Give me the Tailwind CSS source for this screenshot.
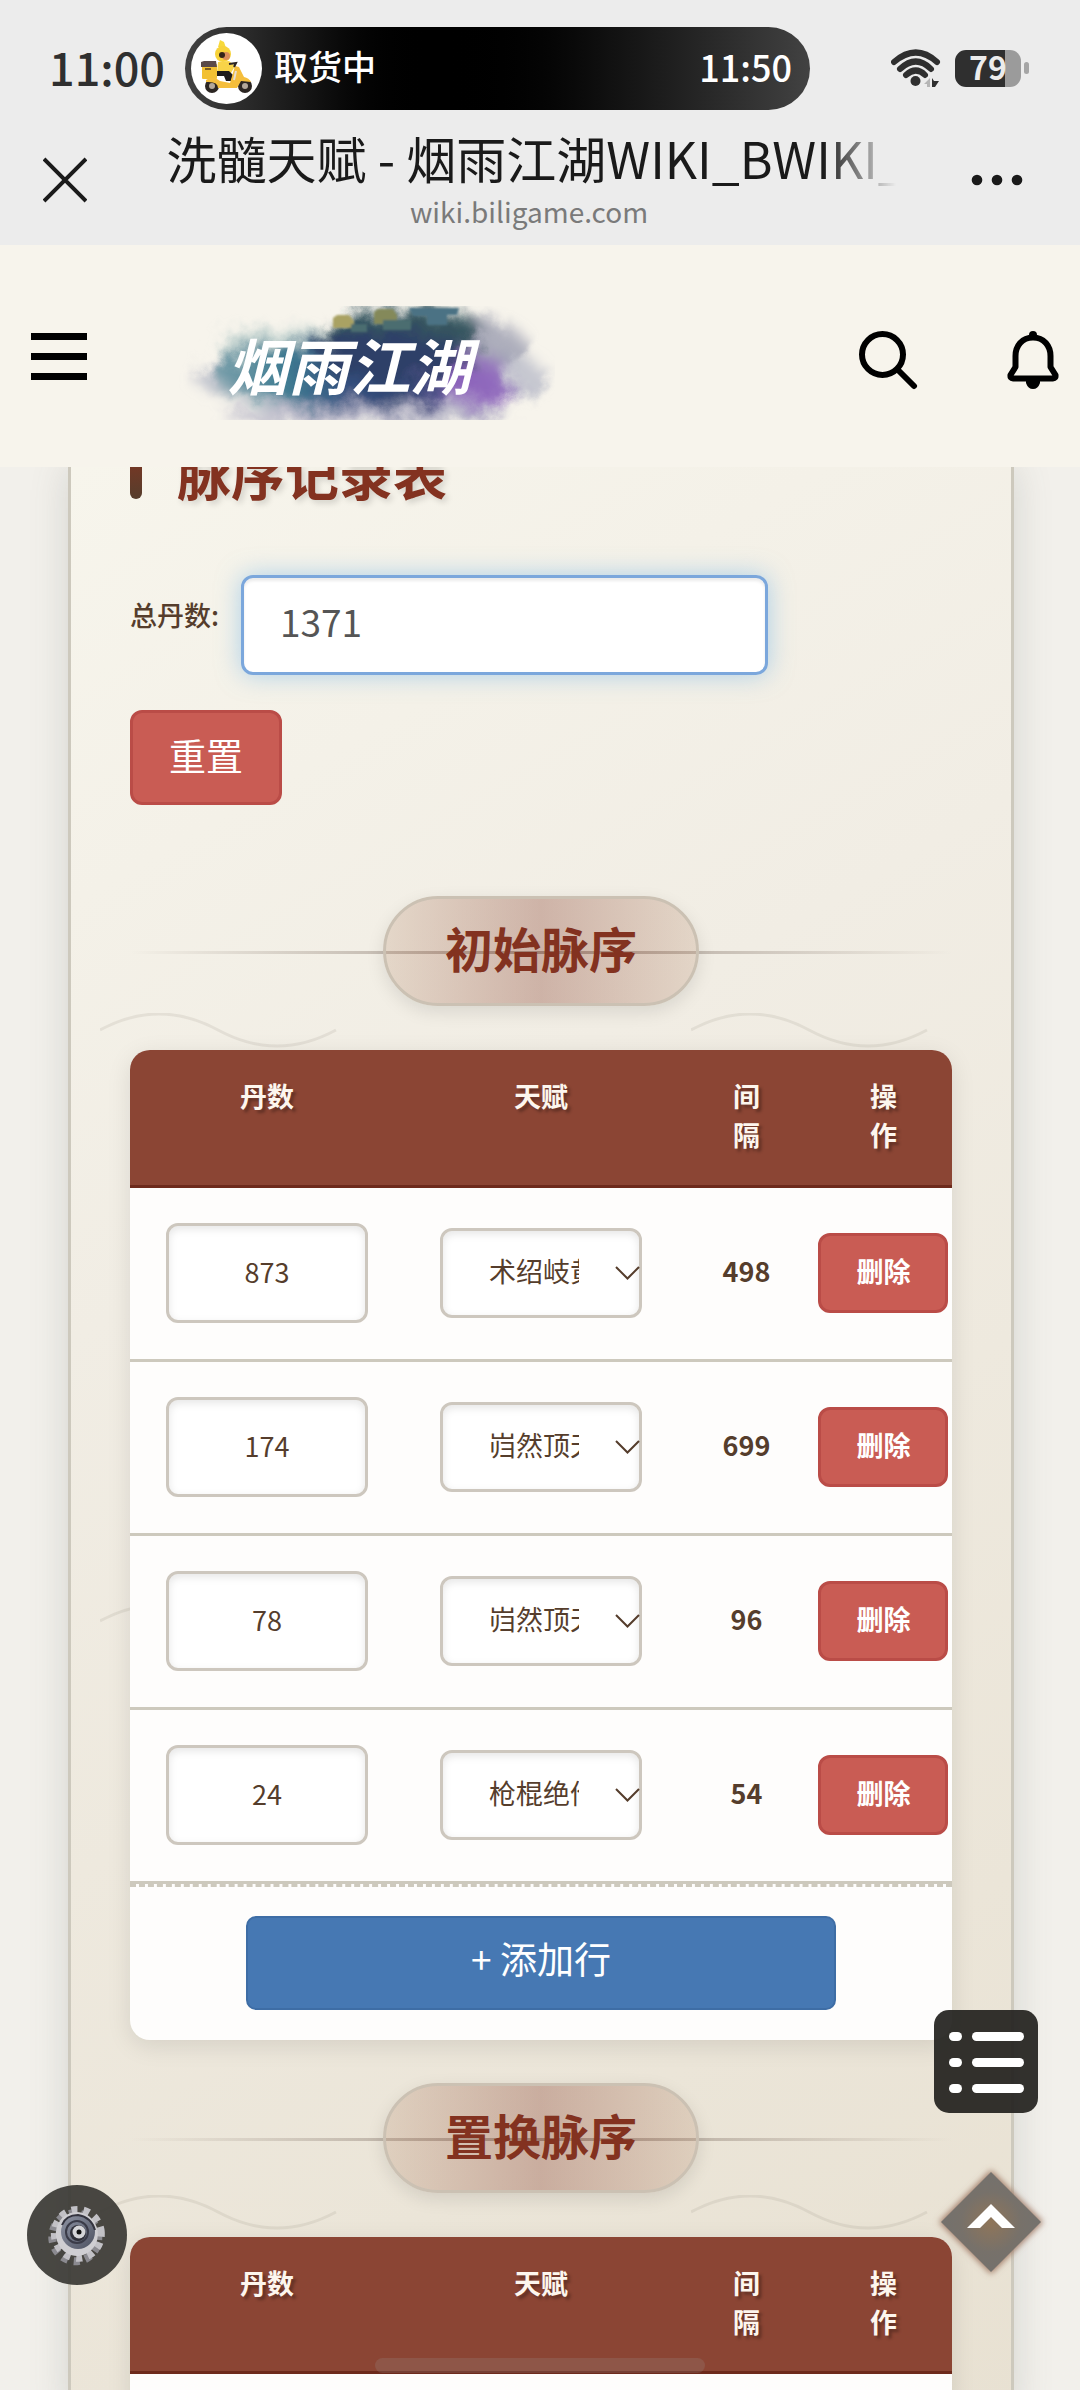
<!DOCTYPE html>
<html lang="zh-CN">
<head>
    <meta charset="UTF-8">
    <meta name="viewport" content="width=device-width, initial-scale=1.0">
    <title>洗髓天赋 - 烟雨江湖WIKI_BWIKI</title>
    <script src="https://cdn.jsdelivr.net/npm/@tailwindcss/browser@4"></script>
</head>
<body class="relative flex h-screen flex-col overflow-hidden bg-[#f2f0eb] font-['Noto_Sans_CJK_SC',sans-serif] text-[27px] text-[#553d2c]">

    <!-- Phone status bar and browser bar -->
    <div class="shrink-0 bg-[#ececec]">
        <div class="flex h-[136px] items-center pl-[49px] pr-[51px]">
            <span class="w-[136px] pb-1 text-[45px] leading-none font-medium text-[#2f2f2f]">11:00</span>
            <div class="flex h-[83px] w-[625px] items-center rounded-full bg-linear-to-r from-[#424242] via-black via-40% to-[#424242] pl-[6px] pr-[18px] text-white">
                <svg class="h-[71px] w-[71px]" viewBox="0 0 71 71">
                    <circle cx="35.500" cy="35.500" r="35.500" fill="#fff"/>
                    <path d="M27 14 L29 7 L33 9 L35 15 Z" fill="#f7d93a"/>
                    <circle cx="32" cy="21" r="8" fill="#f7d23a"/>
                    <circle cx="35" cy="23" r="4" fill="#d98d5c"/>
                    <circle cx="31" cy="22" r="3" fill="#332419"/>
                    <path d="M27 29 L38 28 L44 33 L40 40 L26 40 Z" fill="#f8d448"/>
                    <path d="M24 38 H38 L42 42 L40 48 H35 L33 43 H24 Z" fill="#1e1b1b"/>
                    <rect x="11" y="31" width="15" height="15" rx="1" fill="#f2c033"/>
                    <path d="M10 29 L13 28 H25 L26 34 H10 Z" fill="#5a4a49"/>
                    <path d="M14 36 h6" stroke="#7a5b22" stroke-width="2"/>
                    <circle cx="21" cy="53" r="7" fill="#2b2522"/>
                    <circle cx="21" cy="53" r="3" fill="#b3a79a"/>
                    <circle cx="54" cy="53" r="7" fill="#2b2522"/>
                    <circle cx="54" cy="53" r="3" fill="#b3a79a"/>
                    <path d="M15 47 Q22 42 29 48 L39 50 L44 33 L48 34 L53 44 Q58 45 60 49 L50 48 L46 55 H27 Q27 48 15 49 Z" fill="#f5be3c"/>
                    <path d="M38 31 L45 30 L43 34" fill="none" stroke="#2b2522" stroke-width="2"/>
                    <path d="M45 38 L43 47" stroke="#e7dfd2" stroke-width="2"/>
                </svg>
                <span class="ml-3 pb-1 text-[34px] leading-none font-medium">取货中</span>
                <span class="ml-auto pb-1 text-[36px] leading-none font-medium">11:50</span>
            </div>
            <svg class="ml-auto h-[38px] w-[50px]" viewBox="0 0 50 38">
                <g fill="none" stroke="#2f2f2f" stroke-width="6" stroke-linecap="round">
                    <path d="M3 13 Q25 -6 46 13"/>
                    <path d="M9 20 Q25 5 40 20"/>
                    <path d="M15 26 Q25 17 34 26"/>
                </g>
                <circle cx="24.500" cy="32" r="5" fill="#2f2f2f"/>
                <path d="M39 29 V38 H36 V35 H33 Z" fill="#b5b5b5"/>
                <path d="M41 29 L43 32 H48 L44 38 H41 Z" fill="#2f2f2f"/>
            </svg>
            <div class="ml-[14px] flex items-center gap-[3px]">
                <div class="flex h-[37px] w-[66px] items-center justify-center rounded-[11px] bg-linear-to-r from-[#2f2f2f] from-76% to-[#9b9b9b] to-76% pb-1 text-[32px] leading-none font-bold text-[#ececec]">79</div>
                <div class="h-[12px] w-[5px] rounded-full bg-[#a5a5a5]"></div>
            </div>
        </div>
        <div class="flex h-[109px] justify-between pl-[43px] pr-[57px]">
            <button aria-label="关闭" class="mt-[21px] h-[46px] w-[44px]">
                <svg class="h-[46px] w-[44px]" viewBox="0 0 44 46" stroke="#1a1a1a" stroke-width="4"><path d="M1 2 L43 44 M43 2 L1 44"/></svg>
            </button>
            <div class="w-[733px] text-center">
                <div class="h-[60px] overflow-hidden mask-r-from-90% mask-r-to-100% pl-1 text-left text-[50px] leading-[42px] whitespace-nowrap text-[#1a1a1a]">洗髓天赋 - 烟雨江湖WIKI_BWIKI_</div>
                <div class="text-[28px] leading-[30px] text-[#7a7a7a]">wiki.biligame.com</div>
            </div>
            <button aria-label="更多" class="mt-[38px] h-3 w-[52px]">
                <svg class="h-3 w-[52px]" viewBox="0 0 52 12" fill="#1a1a1a"><circle cx="6" cy="6" r="5.300"/><circle cx="26" cy="6" r="5.300"/><circle cx="46" cy="6" r="5.300"/></svg>
            </button>
        </div>
    </div>

    <!-- Site header -->
    <header class="flex h-[222px] shrink-0 items-center bg-[#f7f4ec] pl-[31px] pr-[21px]">
        <button aria-label="菜单" class="flex w-[56px] flex-col gap-[13px]">
            <span class="h-[7px] w-full bg-black"></span>
            <span class="h-[7px] w-full bg-black"></span>
            <span class="h-[7px] w-full bg-black"></span>
        </button>
        <a href="#" class="ml-[84px] mt-[14px] block">
            <svg class="h-[114px] w-[384px]" viewBox="0 0 384 114" role="img" aria-label="烟雨江湖">
                <defs>
                    <filter id="ink" x="-20%" y="-20%" width="140%" height="140%">
                        <feGaussianBlur stdDeviation="7" result="b"/>
                        <feTurbulence type="fractalNoise" baseFrequency="0.04" numOctaves="4" seed="4" result="n"/>
                        <feDisplacementMap in="b" in2="n" scale="26"/>
                    </filter>
                    <filter id="roof" x="-10%" y="-10%" width="120%" height="120%"><feGaussianBlur stdDeviation="1"/></filter>
                    <linearGradient id="wash" x1="0" x2="1">
                        <stop offset="0" stop-color="#7fa3ad"/>
                        <stop offset=".25" stop-color="#3f7c92"/>
                        <stop offset=".45" stop-color="#34507f"/>
                        <stop offset=".65" stop-color="#2f4470"/>
                        <stop offset=".85" stop-color="#8a6bb5"/>
                        <stop offset="1" stop-color="#b3a8c4"/>
                    </linearGradient>
                </defs>
                <g filter="url(#ink)">
                    <ellipse cx="200" cy="70" rx="178" ry="32" fill="#b9bcc9" opacity=".8"/>
                    <ellipse cx="116" cy="44" rx="68" ry="22" fill="#b5cbc9" opacity=".7"/>
                    <ellipse cx="296" cy="42" rx="60" ry="30" fill="#8e92a8" opacity=".7"/>
                    <ellipse cx="190" cy="68" rx="150" ry="34" fill="url(#wash)"/>
                    <ellipse cx="234" cy="26" rx="78" ry="24" fill="#35545f"/>
                    <ellipse cx="220" cy="50" rx="76" ry="26" fill="#2d4068"/>
                    <ellipse cx="308" cy="80" rx="32" ry="24" fill="#8d63bd" opacity=".8"/>
                    <ellipse cx="196" cy="108" rx="144" ry="10" fill="#9c9db8" opacity=".7"/>
                </g>
                <g filter="url(#roof)">
                    <path d="M162 12 L166 9 H178 L183 15 V22 H162 Z" fill="#a9a264"/>
                    <path d="M203 6 L207 3 H222 L226 9 V18 H203 Z" fill="#84895a"/>
                    <path d="M238 2 H288 L286 9 H276 V19 H256 V10 H242 Z" fill="#4b7284"/>
                    <path d="M180 18 H196 V26 H180 Z M212 14 H240 V24 H212 Z" fill="#4c6d70"/>
                </g>
                <text x="56" y="84" font-size="61" font-weight="700" font-style="italic" fill="#fff">烟雨江湖</text>
            </svg>
        </a>
        <button aria-label="搜索" class="mt-[8px] ml-auto">
            <svg class="h-[60px] w-[60px]" viewBox="0 0 60 60" fill="none" stroke="#000" stroke-width="6" stroke-linecap="round"><circle cx="24.500" cy="24.500" r="20.500"/><path d="M40 40 L56 56"/></svg>
        </button>
        <button aria-label="消息" class="mt-[8px] ml-[89px]">
            <svg class="h-[60px] w-[52px]" viewBox="0 0 52 60" fill="none" stroke="#000" stroke-width="6" stroke-linejoin="round">
                <path d="M26 7.500 C15 7.500 8.500 16 8.500 26 V37 L3.500 45 Q3 48.500 6 48.500 H46 Q49 48.500 48.500 45 L43.500 37 V26 C43.500 16 37 7.500 26 7.500 Z"/>
                <circle cx="26" cy="5" r="4" fill="#000" stroke="none"/>
                <path d="M19 49 H33 V53 Q31 59 26 59 Q21 59 19 53 Z" fill="#000" stroke="none"/>
            </svg>
        </button>
    </header>

    <main class="min-h-0 flex-1 overflow-hidden">
        <div class="relative ml-[68px] mr-[66px] flow-root min-h-full border-x-[3px] border-[#cdc9bd] bg-linear-[150deg] from-[#f7f5ec] via-[#f1ede4] via-35% to-[#e8e1d2] px-[59px] shadow-[0_0_36px_rgba(90,100,100,0.2)]">
            <!-- wave motif behind the tables -->
            <svg class="absolute inset-0 h-full w-full" aria-hidden="true">
                <defs>
                    <pattern id="wave" x="29" y="546" width="591" height="591" patternUnits="userSpaceOnUse">
                        <path d="M0 17 Q59 -15 118 17 T236 17" fill="none" stroke="#8b8375" stroke-opacity=".14" stroke-width="3"/>
                    </pattern>
                </defs>
                <rect width="100%" height="100%" fill="url(#wave)"/>
            </svg>

            <div class="relative">
                <h2 class="-mt-[28px] flex h-[68px] items-center gap-[35px] text-[54px] leading-none font-bold text-[#833220] text-shadow-[3px_3px_6px_rgba(0,0,0,0.15)]">
                    <span class="h-[52px] w-3 rounded-full bg-linear-to-b from-[#833220] to-[#553d2c]"></span>
                    脉序记录表
                </h2>

                <div class="mt-[68px] flex items-center">
                    <label for="total" class="w-[111px] pb-[20px] text-[27px] font-medium">总丹数:</label>
                    <input id="total" type="text" inputmode="numeric" value="1371" class="h-[100px] w-[527px] rounded-[12px] border-[3px] border-[#7ba7dc] bg-white px-[36px] pb-2 text-[37px] text-[#555] shadow-[inset_0_3px_3px_rgba(0,0,0,0.08),0_0_24px_rgba(102,175,233,0.5)] outline-none">
                </div>
                <button class="mt-[35px] h-[95px] w-[152px] rounded-[12px] border-[3px] border-[#ba4c47] bg-[#c95c54] pb-1 text-[37px] text-white">重置</button>

                <section class="mt-[91px]">
                    <div class="relative flex justify-center">
                        <div class="absolute top-[55px] right-0 left-0 h-[3px] bg-linear-to-r from-transparent via-[#8b7b70]/70 to-transparent"></div>
                        <h3 class="relative flex h-[110px] w-[316px] items-center justify-center rounded-full border-[3px] border-[#cbc1b3] bg-linear-to-r from-[#b08060]/22 via-[#8b4534]/35 to-[#b08060]/22 pb-2 text-[48px] leading-none font-bold text-[#833220] shadow-[0_6px_18px_rgba(0,0,0,0.1)]">初始脉序</h3>
                    </div>
                    <div class="mt-11 overflow-hidden rounded-[20px] bg-[#fefdfc] shadow-[0_6px_24px_rgba(0,0,0,0.1)]">
                        <table class="w-full table-fixed text-center">
                            <thead>
                                <tr class="h-[136px] border-b-[3px] border-[#6d2a1c] bg-[#8b4534] align-top leading-[39px] text-[#fdf6ee] text-shadow-[3px_3px_3px_rgba(0,0,0,0.3)]">
                                    <th scope="col" class="w-1/3 pt-[26px] font-bold">丹数</th>
                                    <th scope="col" class="w-1/3 pt-[26px] font-bold">天赋</th>
                                    <th scope="col" class="w-1/6 px-[48px] pt-[26px] font-bold">间隔</th>
                                    <th scope="col" class="w-1/6 px-[48px] pt-[26px] font-bold">操作</th>
                                </tr>
                            </thead>
                            <tbody>
                                <tr class="h-[174px] border-b-[3px] border-[#cdc9bd]">
                                    <td class="px-9"><input type="text" aria-label="丹数" value="873" class="h-[100px] w-full rounded-[12px] border-[3px] border-[#cdc7be] bg-white pb-1 text-center shadow-[inset_0_3px_9px_rgba(0,0,0,0.1)]"></td>
                                    <td class="px-9">
                                        <div class="relative">
                                            <select aria-label="天赋" class="h-[90px] w-full appearance-none rounded-[12px] border-[3px] border-[#cdc7be] bg-white pr-[60px] pb-1 pl-[46px] shadow-[inset_0_3px_9px_rgba(0,0,0,0.1)]"><option>术绍岐黄</option></select>
                                            <svg class="pointer-events-none absolute top-[38px] right-[2px] h-[14px] w-[25px]" viewBox="0 0 25 14" fill="none" stroke="#553d2c" stroke-width="2"><path d="M1 1 L12.500 12.500 L24 1"/></svg>
                                        </div>
                                    </td>
                                    <td class="pb-1 font-bold">498</td>
                                    <td><button class="h-[80px] w-[130px] rounded-[12px] border-[3px] border-[#ba4c47] bg-[#c95c54] pb-1 font-bold text-white">删除</button></td>
                                </tr>
                                <tr class="h-[174px] border-b-[3px] border-[#cdc9bd]">
                                    <td class="px-9"><input type="text" aria-label="丹数" value="174" class="h-[100px] w-full rounded-[12px] border-[3px] border-[#cdc7be] bg-white pb-1 text-center shadow-[inset_0_3px_9px_rgba(0,0,0,0.1)]"></td>
                                    <td class="px-9">
                                        <div class="relative">
                                            <select aria-label="天赋" class="h-[90px] w-full appearance-none rounded-[12px] border-[3px] border-[#cdc7be] bg-white pr-[60px] pb-1 pl-[46px] shadow-[inset_0_3px_9px_rgba(0,0,0,0.1)]"><option>岿然顶天</option></select>
                                            <svg class="pointer-events-none absolute top-[38px] right-[2px] h-[14px] w-[25px]" viewBox="0 0 25 14" fill="none" stroke="#553d2c" stroke-width="2"><path d="M1 1 L12.500 12.500 L24 1"/></svg>
                                        </div>
                                    </td>
                                    <td class="pb-1 font-bold">699</td>
                                    <td><button class="h-[80px] w-[130px] rounded-[12px] border-[3px] border-[#ba4c47] bg-[#c95c54] pb-1 font-bold text-white">删除</button></td>
                                </tr>
                                <tr class="h-[174px] border-b-[3px] border-[#cdc9bd]">
                                    <td class="px-9"><input type="text" aria-label="丹数" value="78" class="h-[100px] w-full rounded-[12px] border-[3px] border-[#cdc7be] bg-white pb-1 text-center shadow-[inset_0_3px_9px_rgba(0,0,0,0.1)]"></td>
                                    <td class="px-9">
                                        <div class="relative">
                                            <select aria-label="天赋" class="h-[90px] w-full appearance-none rounded-[12px] border-[3px] border-[#cdc7be] bg-white pr-[60px] pb-1 pl-[46px] shadow-[inset_0_3px_9px_rgba(0,0,0,0.1)]"><option>岿然顶天</option></select>
                                            <svg class="pointer-events-none absolute top-[38px] right-[2px] h-[14px] w-[25px]" viewBox="0 0 25 14" fill="none" stroke="#553d2c" stroke-width="2"><path d="M1 1 L12.500 12.500 L24 1"/></svg>
                                        </div>
                                    </td>
                                    <td class="pb-1 font-bold">96</td>
                                    <td><button class="h-[80px] w-[130px] rounded-[12px] border-[3px] border-[#ba4c47] bg-[#c95c54] pb-1 font-bold text-white">删除</button></td>
                                </tr>
                                <tr class="h-[174px] border-b-[3px] border-[#cdc9bd]">
                                    <td class="px-9"><input type="text" aria-label="丹数" value="24" class="h-[100px] w-full rounded-[12px] border-[3px] border-[#cdc7be] bg-white pb-1 text-center shadow-[inset_0_3px_9px_rgba(0,0,0,0.1)]"></td>
                                    <td class="px-9">
                                        <div class="relative">
                                            <select aria-label="天赋" class="h-[90px] w-full appearance-none rounded-[12px] border-[3px] border-[#cdc7be] bg-white pr-[60px] pb-1 pl-[46px] shadow-[inset_0_3px_9px_rgba(0,0,0,0.1)]"><option>枪棍绝伦</option></select>
                                            <svg class="pointer-events-none absolute top-[38px] right-[2px] h-[14px] w-[25px]" viewBox="0 0 25 14" fill="none" stroke="#553d2c" stroke-width="2"><path d="M1 1 L12.500 12.500 L24 1"/></svg>
                                        </div>
                                    </td>
                                    <td class="pb-1 font-bold">54</td>
                                    <td><button class="h-[80px] w-[130px] rounded-[12px] border-[3px] border-[#ba4c47] bg-[#c95c54] pb-1 font-bold text-white">删除</button></td>
                                </tr>
                            </tbody>
                        </table>
                        <div class="flex justify-center border-t-[3px] border-dashed border-[#cdc9bd] pt-[29px] pb-[30px]">
                            <button class="h-[94px] w-[590px] rounded-[10px] border-2 border-[#3e6da5] bg-[#4678b3] pb-2 text-[37px] text-white">+ 添加行</button>
                        </div>
                    </div>
                </section>

                <section class="mt-[43px]">
                    <div class="relative flex justify-center">
                        <div class="absolute top-[55px] right-0 left-0 h-[3px] bg-linear-to-r from-transparent via-[#8b7b70]/70 to-transparent"></div>
                        <h3 class="relative flex h-[110px] w-[316px] items-center justify-center rounded-full border-[3px] border-[#cbc1b3] bg-linear-to-r from-[#b08060]/22 via-[#8b4534]/35 to-[#b08060]/22 pb-2 text-[48px] leading-none font-bold text-[#833220] shadow-[0_6px_18px_rgba(0,0,0,0.1)]">置换脉序</h3>
                    </div>
                    <div class="mt-11 overflow-hidden rounded-[20px] bg-[#fefdfc] pb-[40px] shadow-[0_6px_24px_rgba(0,0,0,0.1)]">
                        <table class="w-full table-fixed text-center">
                            <thead>
                                <tr class="h-[136px] border-b-[3px] border-[#6d2a1c] bg-[#8b4534] align-top leading-[39px] text-[#fdf6ee] text-shadow-[3px_3px_3px_rgba(0,0,0,0.3)]">
                                    <th scope="col" class="w-1/3 pt-[26px] font-bold">丹数</th>
                                    <th scope="col" class="w-1/3 pt-[26px] font-bold">天赋</th>
                                    <th scope="col" class="w-1/6 px-[48px] pt-[26px] font-bold">间隔</th>
                                    <th scope="col" class="w-1/6 px-[48px] pt-[26px] font-bold">操作</th>
                                </tr>
                            </thead>
                        </table>
                    </div>
                </section>
            </div>
        </div>
    </main>

    <!-- Floating controls -->
    <button aria-label="目录" class="absolute right-[42px] bottom-[277px] h-[103px] w-[104px] rounded-[15px] bg-[#23221f]/93">
        <svg class="h-[103px] w-[104px]" viewBox="0 0 104 103" fill="#fff">
            <rect x="15" y="22" width="13" height="9" rx="4.500"/><rect x="38" y="22" width="52" height="9" rx="4.500"/>
            <rect x="15" y="48" width="13" height="9" rx="4.500"/><rect x="38" y="48" width="52" height="9" rx="4.500"/>
            <rect x="15" y="74" width="13" height="9" rx="4.500"/><rect x="38" y="74" width="52" height="9" rx="4.500"/>
        </svg>
    </button>
    <button aria-label="返回顶部" class="absolute right-[29px] bottom-[108px] h-[120px] w-[120px]">
        <svg class="h-[120px] w-[120px]" viewBox="0 0 120 120">
            <defs>
                <radialGradient id="glow"><stop offset="0" stop-color="#8f7559"/><stop offset=".6" stop-color="#77716a"/><stop offset="1" stop-color="#74716d"/></radialGradient>
                <filter id="halo" x="-20%" y="-20%" width="140%" height="140%"><feGaussianBlur stdDeviation="3"/></filter>
            </defs>
            <path d="M60 8 L112 60 L60 112 L8 60 Z" fill="#a07a66" filter="url(#halo)"/>
            <path d="M60 10 L110 60 L60 110 L10 60 Z" fill="url(#glow)"/>
            <path d="M60 42 L84 66 H71 L60 55 L49 66 H36 Z" fill="#fff"/>
        </svg>
    </button>
    <button aria-label="设置" class="absolute bottom-[105px] left-[27px] h-[100px] w-[100px] rounded-full bg-[#393834]/92">
        <svg class="h-[100px] w-[100px]" viewBox="0 0 100 100">
            <defs>
                <linearGradient id="steel" x1="0" y1="0" x2="1" y2="1"><stop offset="0" stop-color="#8e93a3"/><stop offset=".5" stop-color="#6f7484"/><stop offset="1" stop-color="#4c5060"/></linearGradient>
            </defs>
            <g transform="rotate(-8 50 50)" fill="none">
                <ellipse cx="48" cy="52" rx="23" ry="24" stroke="#8b8a90" stroke-width="8" stroke-dasharray="6 5.900"/>
                <ellipse cx="51" cy="49" rx="23" ry="24" stroke="#c2c1c6" stroke-width="8" stroke-dasharray="6 5.900"/>
                <ellipse cx="50" cy="49" rx="21" ry="22" fill="#cfced2"/>
            </g>
            <ellipse cx="51" cy="47" rx="17" ry="17" fill="url(#steel)"/>
            <path d="M35 40 Q39 30 51 30 Q64 32 68 45" fill="none" stroke="#34343f" stroke-width="2"/>
            <circle cx="50" cy="47" r="11" fill="none" stroke="#3a3b48" stroke-width="2"/>
            <circle cx="51" cy="48" r="8" fill="#2f2f38"/>
            <circle cx="52" cy="47" r="6.500" fill="#d5d5d8"/>
            <circle cx="52" cy="47" r="2.500" fill="#111"/>
        </svg>
    </button>
    <div class="pointer-events-none absolute inset-x-0 bottom-[17px] mx-auto h-[15px] w-[330px] rounded-full bg-[#999]/20"></div>
</body>
</html>
